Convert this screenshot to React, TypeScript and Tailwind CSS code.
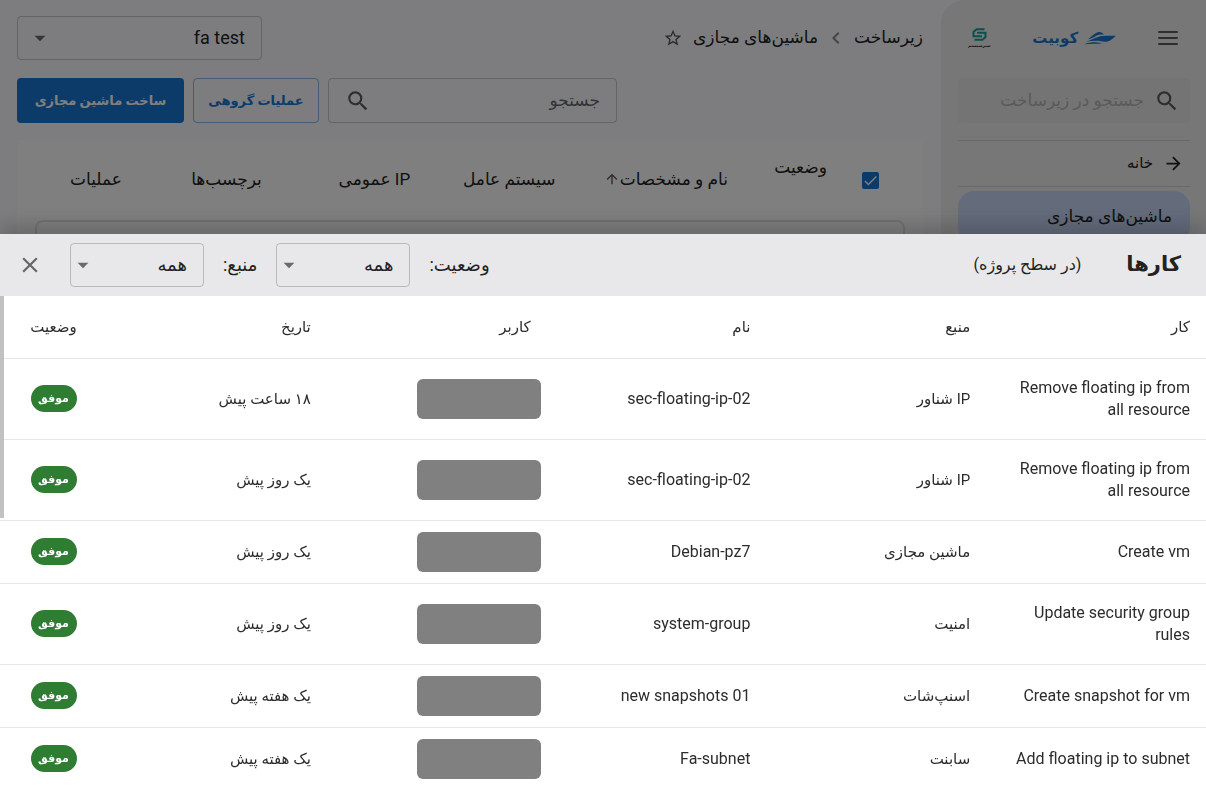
import {
  MdArrowDropDown,
  MdArrowForward,
  MdArrowUpward,
  MdCheck,
  MdClose,
  MdNavigateBefore,
  MdSearch,
  MdStarBorder,
} from 'react-icons/md';

interface Task {
  title: string;
  source: string;
  name: string;
  date: string;
}

const tasks: Task[] = [
  { title: 'Remove floating ip from all resource', source: 'IP شناور', name: 'sec-floating-ip-02', date: '۱۸ ساعت پیش' },
  { title: 'Remove floating ip from all resource', source: 'IP شناور', name: 'sec-floating-ip-02', date: 'یک روز پیش' },
  { title: 'Create vm', source: 'ماشین مجازی', name: 'Debian-pz7', date: 'یک روز پیش' },
  { title: 'Update security group rules', source: 'امنیت', name: 'system-group', date: 'یک روز پیش' },
  { title: 'Create snapshot for vm', source: 'اسنپ‌شات', name: 'new snapshots 01', date: 'یک هفته پیش' },
  { title: 'Add floating ip to subnet', source: 'سابنت', name: 'Fa-subnet', date: 'یک هفته پیش' },
];

interface SelectBoxProps {
  id: string;
  label: string;
  value: string;
  className: string;
  arrowClassName: string;
}

function SelectBox({ id, label, value, className, arrowClassName }: SelectBoxProps) {
  return (
    <div className={`relative ${className}`}>
      <select
        id={id}
        aria-label={label}
        className="h-11 w-full appearance-none rounded border border-black/20 bg-transparent pr-4 pl-9"
      >
        <option>{value}</option>
      </select>
      <MdArrowDropDown
        className={`pointer-events-none absolute top-[9px] size-[26px] text-[#6b6b6b] ${arrowClassName}`}
      />
    </div>
  );
}

function BoatLogo() {
  return (
    <svg viewBox="0 0 32 14" className="h-[14px] w-8 text-[#1976d2]" fill="currentColor" aria-hidden="true">
      <path d="M4 8.200C7.500 6 10 2.200 14 1.200c2.500-.5 4.500.5 6 2.500-3-.3-5.500 0-8.500 1.500C9 6.500 7 7.600 4 8.200z" />
      <path d="M2 10.600C7 9.400 10.500 6.600 15.500 5.400c3-.6 5.500-.6 8.500-.7 2.700-.1 5.200-.1 7.700 0-2 2.200-4.700 4.700-8.200 5.700-2.500.7-4.500-.2-7.500-.5-4.700-.4-9.500.1-14 .7z" />
      <path d="M.3 13.300C4 11.700 9 11.200 13 11.400c2 .1 3.500.7 5.500.4-2.500 1.400-5 1-8 .9-3.500-.1-7 .2-10.200.6z" />
    </svg>
  );
}

function PartnerLogo() {
  return (
    <span className="flex flex-col items-center gap-0.5">
      <svg viewBox="0 0 15 13" className="h-[13px] w-[15px]" fill="none" stroke="#12a594" strokeWidth="2" aria-hidden="true">
        <path d="M12.500 1.300H4.500L1.500 4V8.200H10" />
        <path d="M5 4.800H13.500V9L10.500 11.700H2.500" />
      </svg>
      <span className="text-[4px] font-bold leading-[6px] text-[#222]">سبزسیستم</span>
    </span>
  );
}

function Sidebar() {
  return (
    <aside className="flex w-[265px] shrink-0 flex-col rounded-tl-3xl bg-[#eeeef1] pl-[17px] pr-4">
      <div className="flex h-[76px] items-center justify-between pl-2.5 pr-3">
        <button aria-label="منو" className="text-[#5c5c5c]">
          <svg viewBox="0 0 20 14" className="h-[14px] w-5" stroke="currentColor" strokeWidth="2" strokeLinecap="round">
            <path d="M1 1H19M1 7H19M1 13H19" />
          </svg>
        </button>
        <a href="#" className="flex items-center gap-1.5">
          <BoatLogo />
          <span className="text-[15px] font-bold text-[#1976d2]">کوبیت</span>
        </a>
        <PartnerLogo />
      </div>

      <label className="mt-[2px] flex h-[45px] items-center gap-2.5 rounded bg-[#e9e9e9] px-2.5">
        <MdSearch className="size-[26px] shrink-0 text-[#5c5c5c]" />
        <input
          type="search"
          placeholder="جستجو در زیرساخت"
          aria-label="جستجو در زیرساخت"
          className="w-full min-w-0 bg-transparent text-[17px] placeholder:text-[#b4b4b4]"
        />
      </label>

      <a href="#" className="mt-[17px] flex h-[47px] items-center gap-2.5 border-y border-[#d2d2d4] px-1.5 text-[15px]">
        <MdArrowForward className="size-[21px]" />
        خانه
      </a>
      <a href="#" className="mt-1 flex h-[52px] items-center rounded-2xl bg-[#c8d8f8] px-[18px] text-[17px]">
        ماشین‌های مجازی
      </a>
    </aside>
  );
}

function Machines() {
  return (
    <main className="min-w-0 flex-1 pl-[17px] pr-[18px] pt-4">
      <div className="flex items-center justify-between">
        <nav className="flex items-center gap-1.5 text-[17px]">
          <a href="#">زیرساخت</a>
          <MdNavigateBefore className="size-6 text-[#8a8a8a]" />
          <a href="#">ماشین‌های مجازی</a>
          <button aria-label="افزودن به علاقه‌مندی‌ها" className="mr-1">
            <MdStarBorder className="size-5 text-[#555]" />
          </button>
        </nav>
        <SelectBox
          id="project"
          label="پروژه"
          value="fa test"
          className="w-[245px] text-lg"
          arrowClassName="left-[10px]"
        />
      </div>

      <div className="mt-[18px] flex justify-end gap-[9px] text-[13px] font-bold">
        <label className="flex h-[45px] w-[289px] items-center rounded border border-black/20 px-4 font-normal">
          <input
            type="search"
            placeholder="جستجو"
            aria-label="جستجو"
            className="w-full min-w-0 bg-transparent text-[17px] placeholder:text-[#666]"
          />
          <MdSearch className="size-[26px] shrink-0 text-[#5c5c5c]" />
        </label>
        <button className="w-[126px] rounded border border-[#1976d2]/50 text-[#1976d2]">عملیات گروهی</button>
        <button className="w-[167px] rounded bg-[#1976d2] text-white">ساخت ماشین مجازی</button>
      </div>

      <section className="mt-[17px] rounded bg-white px-[18px] pb-4 pt-[15px]">
        <table className="mb-[17px] h-12 w-full table-fixed text-[17px] leading-6">
          <thead>
            <tr>
              <th className="w-[8%]">
                <label className="relative inline-flex align-middle">
                  <input type="checkbox" defaultChecked aria-label="انتخاب همه" className="size-[17px] appearance-none rounded-xs bg-[#1976d2]" />
                  <MdCheck className="pointer-events-none absolute inset-0 size-[17px] text-white" />
                </label>
              </th>
              <th className="w-[8%] whitespace-nowrap align-top font-normal">وضعیت</th>
              <th className="w-[23%] font-normal">
                <span className="inline-flex items-center whitespace-nowrap">
                  نام و مشخصات
                  <MdArrowUpward className="size-4 text-[#555]" />
                </span>
              </th>
              <th className="w-[13%] whitespace-nowrap font-normal">سیستم عامل</th>
              <th className="w-[18%] font-normal">IP عمومی</th>
              <th className="w-[16%] font-normal">برچسب‌ها</th>
              <th className="w-[14%] font-normal">عملیات</th>
            </tr>
          </thead>
        </table>
        <div className="h-20 rounded-lg border-2 border-[#e4e4e4]" />
      </section>
    </main>
  );
}

function TasksSheet() {
  return (
    <section className="fixed inset-x-0 bottom-0 top-[234px] overflow-hidden bg-white shadow-[0_-8px_20px_rgba(0,0,0,0.2)]">
      {/* Header */}
      <header className="flex h-[62px] items-center justify-between bg-[#e8e8ea] pl-[17px] pr-[25px] text-[#222]">
        <div className="flex items-center gap-[45px]">
          <h2 className="text-[21px] font-bold">کارها</h2>
          <span className="text-base">(در سطح پروژه)</span>
        </div>
        <div className="flex items-center gap-[19px] text-lg">
          <label htmlFor="status">وضعیت:</label>
          <SelectBox id="status" label="وضعیت" value="همه" className="w-[134px]" arrowClassName="left-0" />
          <label htmlFor="source">منبع:</label>
          <SelectBox id="source" label="منبع" value="همه" className="w-[134px]" arrowClassName="left-0" />
          <button aria-label="بستن" className="mr-2">
            <MdClose className="size-[26px] text-[#666]" />
          </button>
        </div>
      </header>

      {/* Content */}
      <table className="w-full table-fixed border-collapse text-[15px] leading-[22px] text-[#2c2c2c]">
        <thead>
          <tr className="h-[62px] border-b border-[#e6e6e6] text-right">
            <th className="px-4 font-medium">کار</th>
            <th className="px-4 font-medium">منبع</th>
            <th className="px-4 font-medium">نام</th>
            <th className="px-4 font-medium">کاربر</th>
            <th className="px-4 font-medium">تاریخ</th>
            <th className="w-[107px] text-center font-medium">وضعیت</th>
          </tr>
        </thead>
        <tbody>
          {tasks.map((task, index) => (
            <tr key={index} className="h-[63px] border-b border-[#e6e6e6]">
              <td className="px-4 py-[18px] text-base leading-[22px]">{task.title}</td>
              <td className="px-4">{task.source}</td>
              <td className="px-4 text-base leading-[22px]">{task.name}</td>
              <td className="pr-1.5">
                <div className="h-10 w-[124px] rounded-md bg-[#808080]" />
              </td>
              <td className="px-4">{task.date}</td>
              <td className="text-center">
                <span className="inline-flex h-[27px] w-[46px] items-center justify-center rounded-full bg-[#2e7d32] align-middle text-[11px] font-bold text-white">
                  موفق
                </span>
              </td>
            </tr>
          ))}
        </tbody>
      </table>
      <div className="absolute left-0 top-[62px] h-[222px] w-1 bg-[#c1c1c1]" />
    </section>
  );
}

export default function App() {
  return (
    <div dir="rtl" className="h-screen overflow-hidden bg-[#fafafe] font-[Roboto,'DejaVu_Sans',sans-serif] text-[#222]">
      <div className="flex h-full">
        <Sidebar />
        <Machines />
      </div>
      <div className="fixed inset-0 bg-black/50" />
      <TasksSheet />
    </div>
  );
}
